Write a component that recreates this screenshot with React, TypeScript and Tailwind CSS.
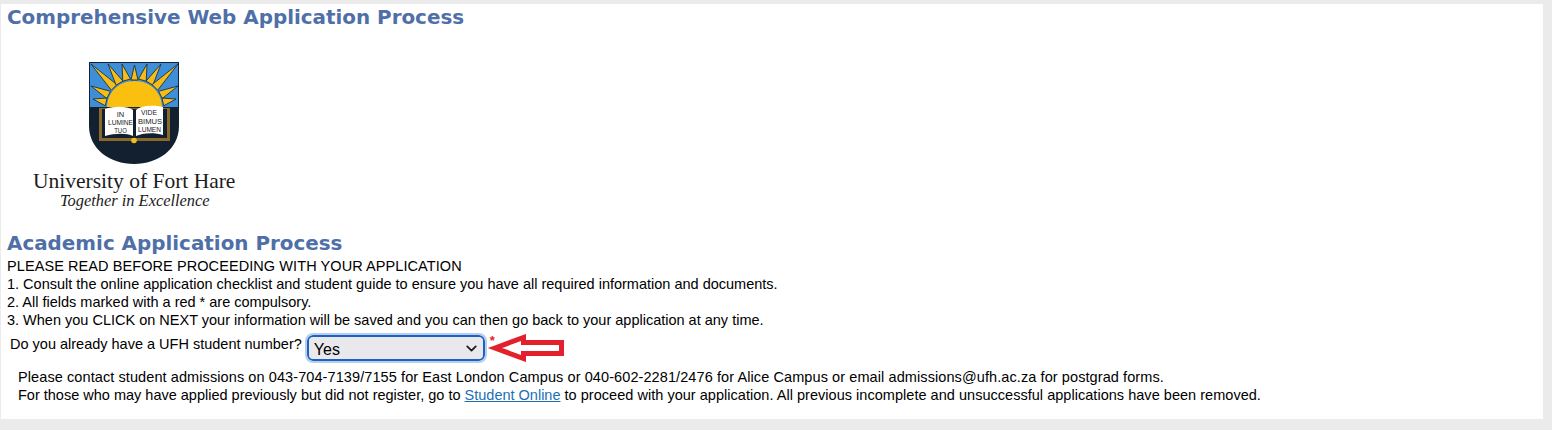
import { ChevronDown } from 'lucide-react';

function UfhLogo() {
  return (
    <svg width="240" height="180" viewBox="0 0 240 180" className="block">
      {/* shield */}
      <path d="M82 22H172V86C172 109 151 124 127 124C103 124 82 109 82 86Z" fill="#12202f" />
      <path d="M82.500 22.500H171.500V68H82.500Z" fill="#3f8fd8" stroke="#12202f" strokeWidth="1" />
      {/* rays */}
      <g fill="#f6bd16" stroke="#16304a" strokeWidth="0.9" strokeLinejoin="round">
        <path d="M84 24L109.900 44.600L104.300 50.200Z" />
        <path d="M101 24L115.900 41L109.100 45.200Z" />
        <path d="M115 24L123.500 39L115.800 41.200Z" />
        <path d="M127.500 25L131 40H124Z" />
        <path d="M140 24L139.200 41.200L131.500 39Z" />
        <path d="M154 24L145.900 45.200L139.100 41Z" />
        <path d="M171 24L150.700 50.200L145.100 44.600Z" />
        <path d="M84 46L103.400 51.300L99.800 58.500Z" />
        <path d="M171 46L155.200 58.500L151.600 51.300Z" />
        <path d="M86 59L100 58L98.300 65.800Z" />
        <path d="M169 59L156.700 65.800L155 58Z" />
      </g>
      <path d="M100 68C100 52 112 41 127.500 41C143 41 155 52 155 68Z" fill="#fabf0f" />
      <rect x="82" y="67" width="90" height="2" fill="#12202f" />
      {/* book */}
      <path d="M92 68H163V101H92Z" fill="#8a6a2c" />
      <path d="M95 69H160V98H95Z" fill="#12202f" />
      <path d="M98 69C108 66 120 66 126 70V96C120 93 108 93 98 96Z" fill="#ffffff" />
      <path d="M129 70C135 65 147 65 156 67V95C147 92 135 93 129 96Z" fill="#ffffff" />
      <circle cx="127" cy="100.500" r="2.800" fill="#f6bd16" />
      <g fontFamily="'Liberation Sans', Arial, sans-serif" fontSize="8" fill="#1b1b1b" textAnchor="middle">
        <text x="113.500" y="77" textLength="7.500" lengthAdjust="spacingAndGlyphs">IN</text>
        <text x="113.500" y="85" textLength="25" lengthAdjust="spacingAndGlyphs">LUMINE</text>
        <text x="113.500" y="93" textLength="12.500" lengthAdjust="spacingAndGlyphs">TUO</text>
        <text x="142" y="75" textLength="16" lengthAdjust="spacingAndGlyphs">VIDE</text>
        <text x="143" y="84" textLength="24" lengthAdjust="spacingAndGlyphs">BIMUS</text>
        <text x="142.500" y="92" textLength="23" lengthAdjust="spacingAndGlyphs">LUMEN</text>
      </g>
      <text x="26" y="148" fontFamily="'Liberation Serif', 'Times New Roman', serif" fontSize="21.500" fill="#1c1c1c">
        University of Fort Hare
      </text>
      <text x="53" y="166" fontFamily="'Liberation Serif', 'Times New Roman', serif" fontSize="16.400" fontStyle="italic" fill="#1c1c1c">
        Together in Excellence
      </text>
    </svg>
  );
}

function RedArrow() {
  return (
    <svg width="80" height="28" viewBox="0 0 80 28" className="absolute left-[180px] top-[-1px]">
      <path d="M8 14L36.500 3.500V8.500H74.500V19.500H36.500V24.500Z" fill="#ffffff" stroke="#e3202c" strokeWidth="5" />
    </svg>
  );
}

export default function App() {
  return (
    <div className="h-[430px] overflow-hidden bg-[#ebebeb] pl-px pr-[9px] pt-1 font-['Liberation_Sans',Arial,sans-serif] text-[14.5px] leading-[18px] text-black">
      <div className="h-[415px] bg-white px-[6px]">
        <h1 className="font-['DejaVu_Sans',Verdana,sans-serif] text-[19.900px] font-bold leading-[27px] text-[#4f6fa8]">
          Comprehensive Web Application Process
        </h1>
        <div className="mt-[9px]">
          <UfhLogo />
        </div>
        <h2 className="mt-[10px] font-['DejaVu_Sans',Verdana,sans-serif] text-[19.900px] font-bold leading-[27px] text-[#4f6fa8]">
          Academic Application Process
        </h2>
        <p className="tracking-[0.08px]">PLEASE READ BEFORE PROCEEDING WITH YOUR APPLICATION</p>
        <p>1. Consult the online application checklist and student guide to ensure you have all required information and documents.</p>
        <p>2. All fields marked with a red * are compulsory.</p>
        <p>3. When you CLICK on NEXT your information will be saved and you can then go back to your application at any time.</p>
        <div className="mt-[6px] flex items-start pl-[3px]">
          <label htmlFor="student-number" className="mr-[5px]">Do you already have a UFH student number?</label>
          <div className="relative">
            <select
              id="student-number"
              defaultValue="Yes"
              className="block h-[26px] w-[178px] appearance-none rounded-[6px] border-2 border-[#1a62c4] bg-[#e9e9ed] pl-[5px] pt-[3px] text-[16px] text-black outline outline-2 outline-[#b9cfe9]"
            >
              <option>Yes</option>
              <option>No</option>
            </select>
            <ChevronDown className="pointer-events-none absolute right-[5px] top-[5px] size-[17px] text-[#1c1c1c]" strokeWidth={2.5} />
            <RedArrow />
            <span className="absolute left-[183px] top-[-1px] text-[13px] font-bold leading-[14px] text-[#e3202c]">*</span>
          </div>
        </div>
        <div className="mt-[7px] pl-[11px]">
          <p className="tracking-[0.09px]">Please contact student admissions on 043-704-7139/7155 for East London Campus or 040-602-2281/2476 for Alice Campus or email admissions@ufh.ac.za for postgrad forms.</p>
          <p>
            For those who may have applied previously but did not register, go to{' '}
            <a href="#" className="text-[#1a6fb5] underline">Student Online</a>
            <span className="tracking-[0.03px]">{' '}to proceed with your application. All previous incomplete and unsuccessful applications have been removed.</span>
          </p>
        </div>
      </div>
    </div>
  );
}
